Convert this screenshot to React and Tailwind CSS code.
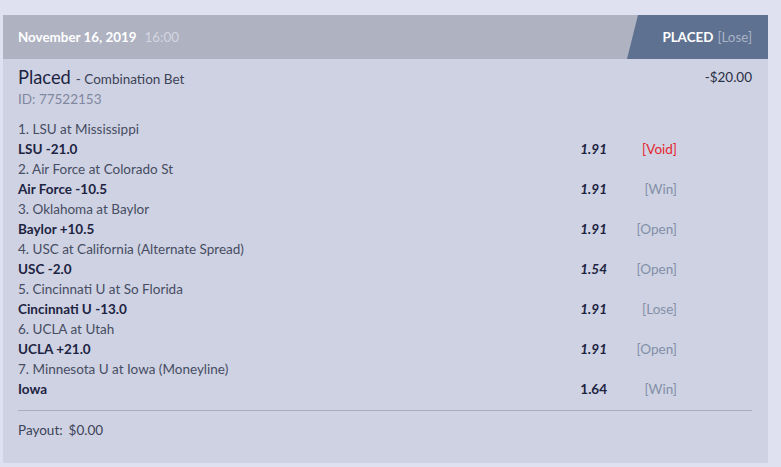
import React from "react";

const legs = [
  { ev: "1. LSU at Mississippi", sel: "LSU -21.0", odds: "1.91", st: "[Void]", red: true },
  { ev: "2. Air Force at Colorado St", sel: "Air Force -10.5", odds: "1.91", st: "[Win]" },
  { ev: "3. Oklahoma at Baylor", sel: "Baylor +10.5", odds: "1.91", st: "[Open]" },
  { ev: "4. USC at California (Alternate Spread)", sel: "USC -2.0", odds: "1.54", st: "[Open]" },
  { ev: "5. Cincinnati U at So Florida", sel: "Cincinnati U -13.0", odds: "1.91", st: "[Lose]" },
  { ev: "6. UCLA at Utah", sel: "UCLA +21.0", odds: "1.91", st: "[Open]" },
  { ev: "7. Minnesota U at Iowa (Moneyline)", sel: "Iowa", odds: "1.64", st: "[Win]", upright: true },
];

export default function App() {
  return (
    <div
      className="w-[781px] h-[467px] bg-[#dfe1f1] pt-[15px] pl-[3px] overflow-hidden"
      style={{ fontFamily: "Lato, 'Noto Sans', sans-serif" }}
    >
      <div className="w-[765px] bg-[#cfd2e2]">
        <div className="h-[44px] bg-[#aeb2c1] flex items-center justify-between">
          <div className="pl-[15px] text-[13.4px] font-bold text-white">
            November 16, 2019
            <span className="ml-[8px] font-normal text-[#d3d6e0]">16:00</span>
          </div>
          <div className="h-full w-[141px] bg-[#5e7191] [clip-path:polygon(11px_0,100%_0,100%_100%,0_100%)] flex items-center justify-end pr-[16px] text-[13.4px]">
            <span className="font-bold text-white">PLACED</span>
            <span className="ml-[4px] text-[#a9b3c6]">[Lose]</span>
          </div>
        </div>
        <div className="px-[15px] pr-[16px] pt-[7px] pb-[23px]">
          <div className="h-[23px] flex items-center justify-between">
            <div className="flex items-baseline">
              <span className="text-[18.3px] text-[#1d2442]">Placed</span>
              <span className="ml-[5px] text-[13.5px] text-[#3c4358]">- Combination Bet</span>
            </div>
            <span className="text-[13.5px] text-[#2a3046]">-$20.00</span>
          </div>
          <div className="h-[20px] flex items-center text-[13.5px] text-[#7f88a0]">ID: 77522153</div>
          <div className="mt-[10px]">
            {legs.map((l, i) => (
              <React.Fragment key={i}>
                <div className="h-[20px] flex items-center text-[13.5px] text-[#464d62]">{l.ev}</div>
                <div className="h-[20px] flex items-center text-[13.5px]">
                  <span className="flex-1 font-bold text-[#1d2442]">{l.sel}</span>
                  <span
                    className={
                      "w-[60px] text-right font-bold text-[#1d2442] " + (l.upright ? "" : "italic")
                    }
                  >
                    {l.odds}
                  </span>
                  <span
                    className={
                      "w-[70px] text-right mr-[75px] " + (l.red ? "text-[#e5262f]" : "text-[#8390a8]")
                    }
                  >
                    {l.st}
                  </span>
                </div>
              </React.Fragment>
            ))}
          </div>
          <div className="mt-[11px] h-px bg-[#a9aebf]" />
          <div className="mt-[9px] h-[20px] flex items-center text-[13.5px] text-[#3c4358]">
            Payout:<span className="ml-[6px]">$0.00</span>
          </div>
        </div>
      </div>
    </div>
  );
}
